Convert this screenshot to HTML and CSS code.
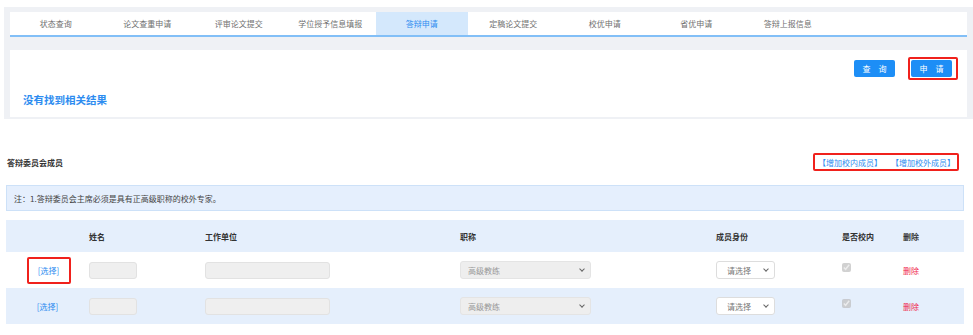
FILE: index.html
```html
<!DOCTYPE html>
<html lang="zh-CN">
<head>
<meta charset="utf-8">
<title>答辩申请</title>
<link rel="stylesheet" href="styles.css">
</head>
<body>
<div class="top">
  <nav class="tabs">
    <a class="tab">状态查询</a>
    <a class="tab">论文查重申请</a>
    <a class="tab">评审论文提交</a>
    <a class="tab">学位授予信息填报</a>
    <a class="tab active">答辩申请</a>
    <a class="tab">定稿论文提交</a>
    <a class="tab">校优申请</a>
    <a class="tab">省优申请</a>
    <a class="tab">答辩上报信息</a>
  </nav>
  <div class="panel">
    <div class="actions">
      <button class="btn">查 询</button>
      <span class="mark mark-btn"><button class="btn">申 请</button></span>
    </div>
    <div class="empty">没有找到相关结果</div>
  </div>
</div>

<section class="members">
  <div class="members-head">
    <h3 class="members-title">答辩委员会成员</h3>
    <span class="mark mark-links">
      <a class="link">【增加校内成员】</a>
      <a class="link">【增加校外成员】</a>
    </span>
  </div>
  <div class="notice">注：1.答辩委员会主席必须是具有正高级职称的校外专家。</div>
  <table class="grid">
    <colgroup>
      <col class="c1"><col class="c2"><col class="c3"><col class="c4"><col class="c5"><col class="c6"><col class="c7">
    </colgroup>
    <thead>
      <tr>
        <th></th><th>姓名</th><th>工作单位</th><th>职称</th><th>成员身份</th><th>是否校内</th><th>删除</th>
      </tr>
    </thead>
    <tbody>
      <tr>
        <td class="pick"><span class="mark mark-pick"><a class="link">[选择]</a></span></td>
        <td><input class="inp inp-name" disabled></td>
        <td><input class="inp inp-unit" disabled></td>
        <td><span class="selwrap sw-title"><select class="sel sel-title" disabled><option>高级教练</option></select></span></td>
        <td><span class="selwrap sw-role"><select class="sel sel-role"><option>请选择</option></select></span></td>
        <td><input type="checkbox" class="chk" checked disabled></td>
        <td><a class="del">删除</a></td>
      </tr>
      <tr class="alt">
        <td class="pick"><a class="link">[选择]</a></td>
        <td><input class="inp inp-name" disabled></td>
        <td><input class="inp inp-unit" disabled></td>
        <td><span class="selwrap sw-title"><select class="sel sel-title" disabled><option>高级教练</option></select></span></td>
        <td><span class="selwrap sw-role"><select class="sel sel-role"><option>请选择</option></select></span></td>
        <td><input type="checkbox" class="chk" checked disabled></td>
        <td><a class="del">删除</a></td>
      </tr>
    </tbody>
  </table>
</section>
</body>
</html>
```

FILE: styles.css
```css
* { box-sizing: border-box; }
body {
  margin: 0;
  background: #fff;
  font-family: "Noto Sans CJK SC", "Noto Sans", sans-serif;
  font-size: 8px;
  color: #555;
}
.top {
  margin: 7px 0 0 4px;
  padding: 5px 6px 2px 6px;
  background: #eff1f5;
}
.tabs {
  display: flex;
  height: 25px;
  background: #fff;
  border-bottom: 2px solid #82bff7;
}
.tab {
  width: 91.5px;
  display: flex;
  align-items: center;
  justify-content: center;
  color: #707070;
  font-size: 8px;
}
.tab.active {
  background: #d4e8fc;
  color: #2d8cf0;
}
.panel {
  margin-top: 13px;
  height: 67px;
  background: #fff;
  padding: 10px 15px 0 13px;
  display: flex;
  flex-direction: column;
}
.actions {
  display: flex;
  justify-content: flex-end;
  align-items: center;
  gap: 13px;
}
.btn {
  width: 41px;
  height: 17px;
  border: 0;
  border-radius: 2px;
  background: #1d8ef6;
  color: #fff;
  font-family: inherit;
  font-size: 8px;
  letter-spacing: 3px;
  padding: 0 0 0 3px;
  line-height: 17px;
}
.mark {
  display: inline-flex;
  border: 2px solid #f0211c;
  border-radius: 2px;
}
.mark-btn { padding: 1px 4px 1px 1px; margin: -3px -6px -3px 0; }
.empty {
  margin-top: 16px;
  color: #2d8cf0;
  font-size: 10.5px;
  font-weight: bold;
  line-height: 14px;
}
.members {
  padding: 0 9px 0 6px;
}
.members-head {
  display: flex;
  justify-content: space-between;
  align-items: center;
  margin-top: 34px;
  height: 18px;
}
.members-title {
  margin: 0 0 0 1px;
  font-size: 8px;
  font-weight: bold;
  color: #333;
}
.mark-links {
  gap: 9px;
  padding: 0 2px 0 3px;
  height: 18px;
  align-items: center;
  margin-right: 5px;
}
.link {
  color: #2d8cf0;
  font-size: 8px;
}
.notice {
  margin-top: 14px;
  height: 26px;
  background: #e5effd;
  border: 1px solid #cde1f8;
  padding-left: 7px;
  display: flex;
  align-items: center;
  color: #444;
  font-size: 8px;
}
.grid {
  margin-top: 9px;
  width: 958px;
  border-collapse: collapse;
  table-layout: fixed;
}
.c1 { width: 83px; }
.c2 { width: 116px; }
.c3 { width: 255px; }
.c4 { width: 256px; }
.c5 { width: 126px; }
.c6 { width: 61px; }
.c7 { width: 61px; }
.grid thead tr { background: #e5effc; height: 32px; }
.grid th {
  text-align: left;
  font-weight: bold;
  color: #333;
  font-size: 8px;
  padding: 0;
}
.grid td { padding: 0; height: 36px; vertical-align: middle; }
.grid tr.alt { background: #e5effc; }
.grid td.pick { text-align: center; }
.mark-pick {
  width: 44px;
  height: 27px;
  align-items: center;
  justify-content: center;
  margin-left: 2px;
}
.inp {
  display: block;
  height: 17px;
  border: 1px solid #e2e2e2;
  border-radius: 3px;
  background: #efefef;
  padding: 0;
}
.inp-name { width: 48px; }
.inp-unit { width: 125px; }
.selwrap {
  position: relative;
  display: block;
}
.sw-title { width: 131px; }
.sw-role { width: 59px; }
.selwrap::after {
  content: "";
  position: absolute;
  top: 6px;
  right: 7px;
  width: 3px;
  height: 3px;
  border-right: 1px solid #666;
  border-bottom: 1px solid #666;
  transform: rotate(45deg);
  pointer-events: none;
}
.sel {
  display: block;
  width: 100%;
  height: 18px;
  border-radius: 3px;
  font-family: inherit;
  font-size: 8px;
  color: #888;
  padding: 0 0 0 7px;
  appearance: none;
  -webkit-appearance: none;
}
.sel-title {
  background: #eee;
  border: 1px solid #e4e4e4;
  opacity: 1;
  color: #999;
}
.sel-role {
  background: #fff;
  border: 1px solid #ddd;
  padding-left: 10px;
  color: #777;
}
.chk {
  margin: 0 0 6px 0;
  width: 9px;
  height: 9px;
}
.del { color: #f0284a; font-size: 8px; }
```
